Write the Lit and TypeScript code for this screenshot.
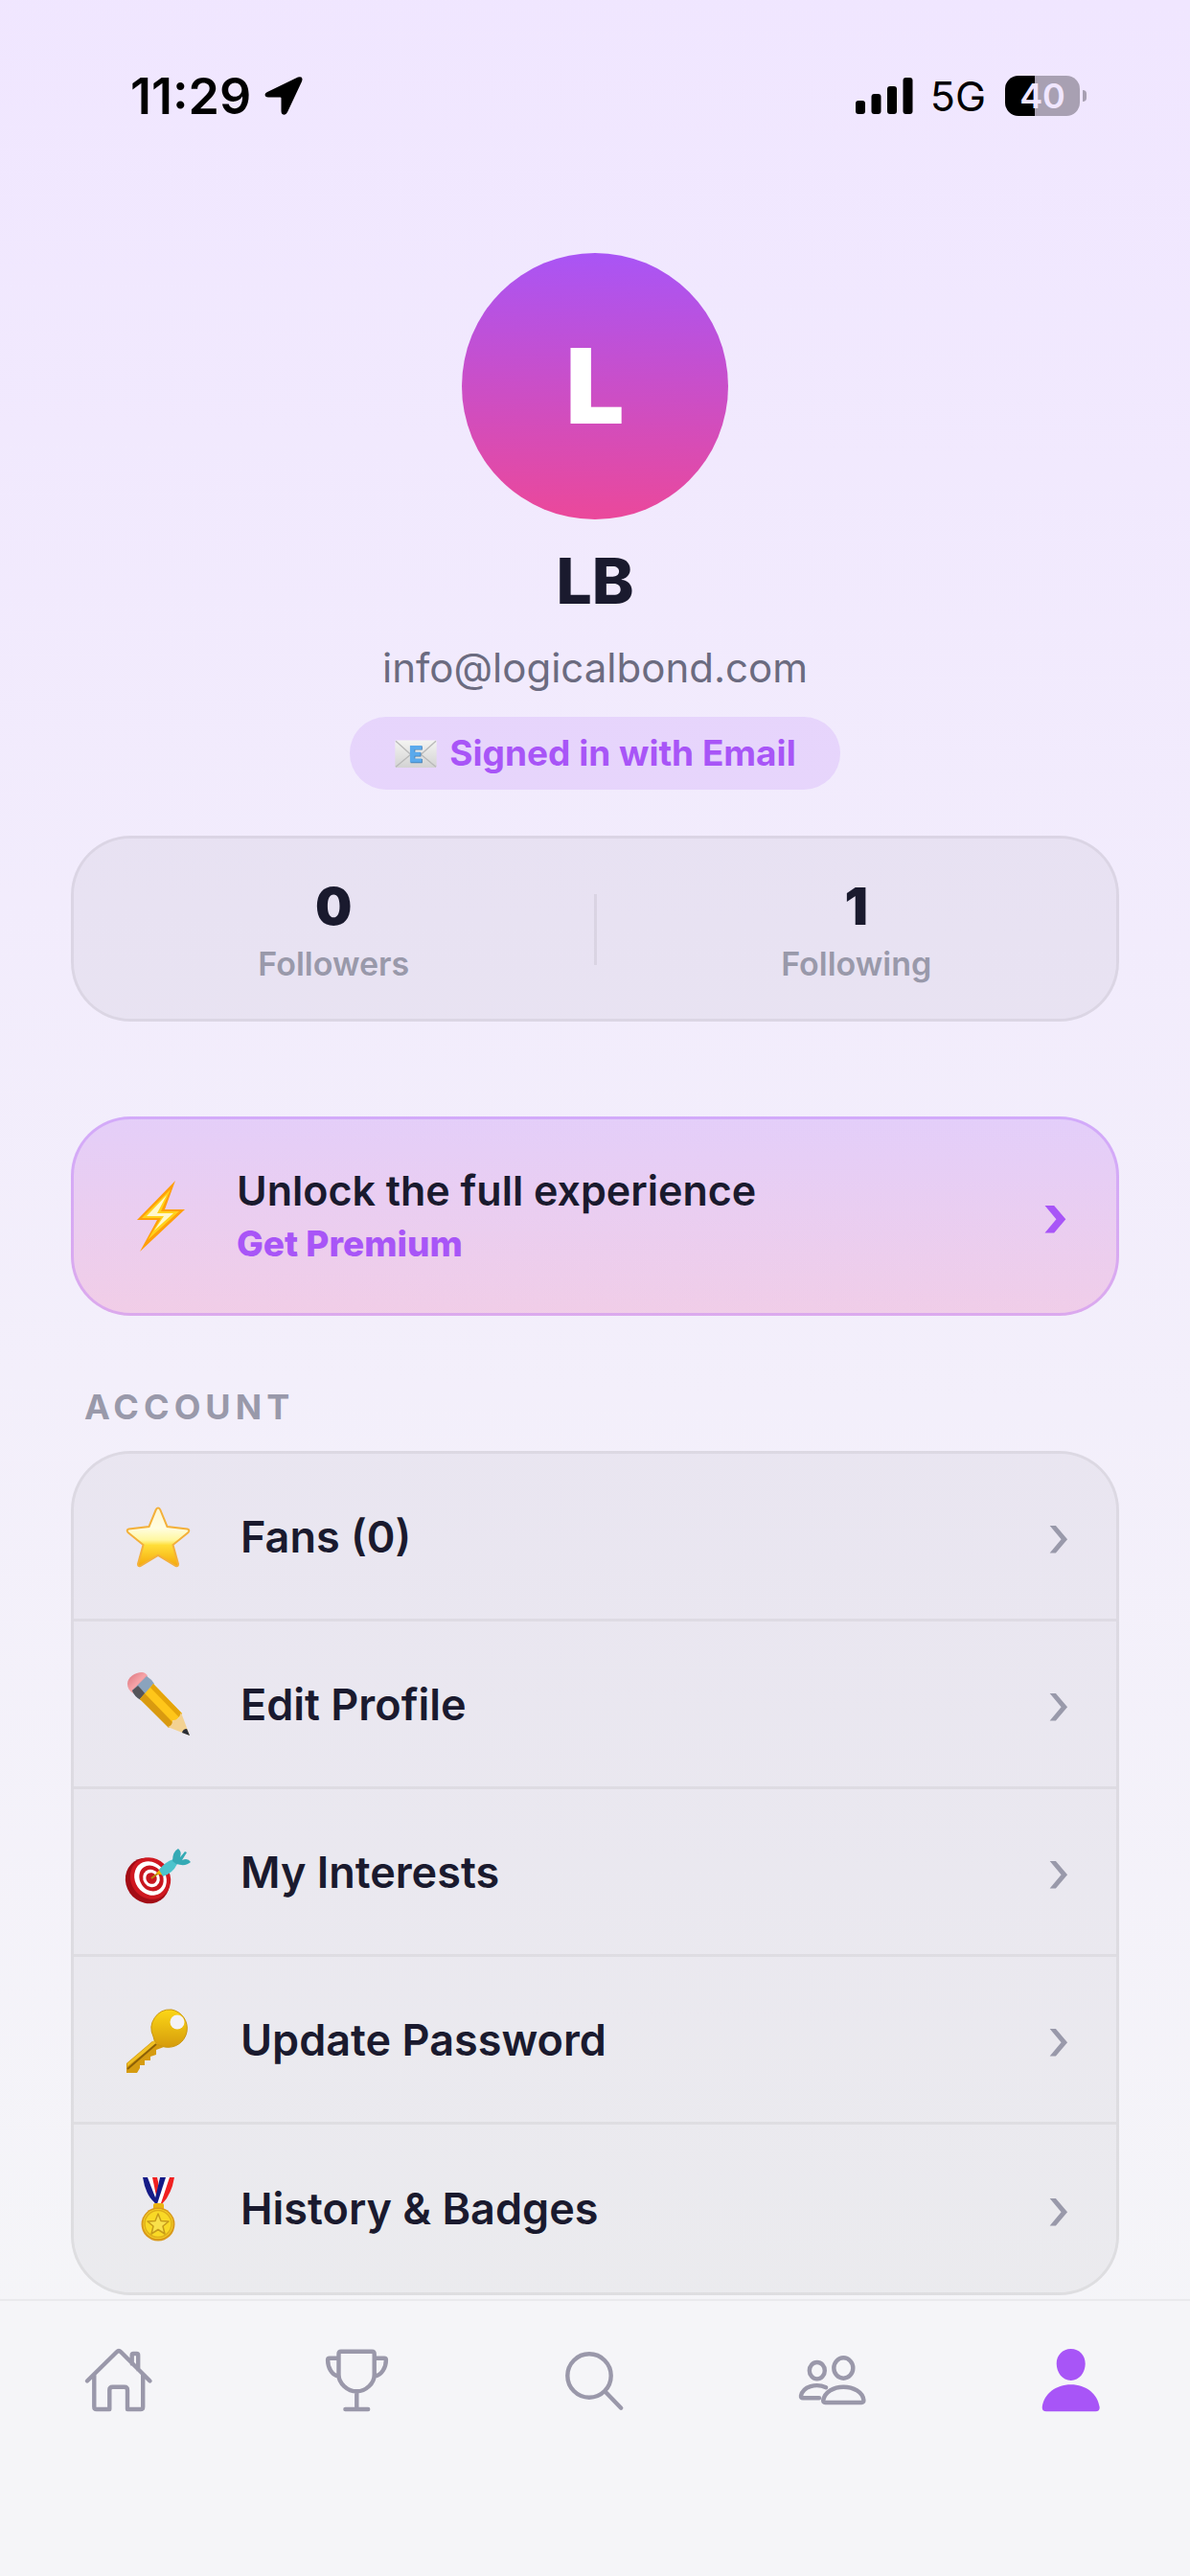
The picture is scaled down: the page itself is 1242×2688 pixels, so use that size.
import { LitElement, html, css, svg } from 'lit';
import { customElement, property, state } from 'lit/decorators.js';
import { classMap } from 'lit/directives/class-map.js';

const emojis: Record<string, unknown> = {
  mail: svg`
    <defs>
      <linearGradient id="paper" x1="0" y1="0" x2="0" y2="1">
        <stop offset="0" stop-color="#f4f4f2"/><stop offset="1" stop-color="#d3d3d3"/>
      </linearGradient>
    </defs>
    <rect x="2" y="14" width="64" height="42" rx="2" fill="url(#paper)"/>
    <path d="M3 15L26 36M65 15L42 36M3 55L27 35M65 55L41 35" stroke="#b9b9b9" stroke-width="2" fill="none"/>
    <path d="M26 23h18v6H33v4h9v6h-9v4h11v6H26z" fill="#3c74a8"/>
    <path d="M25 22h18v6H32v4h9v6h-9v4h11v6H25z" fill="#5aa9ec"/>`,
  bolt: svg`
    <path d="M52 -3L12 38H33L15 71L62 27H41z" fill="#ff9f0a"/>
    <path d="M47 6L17 36H37L23 59L56 29H37z" fill="#ffd21a"/>
    <path d="M43 12L22 34H40L30 49L50 31H33z" fill="#fff8cc"/>`,
  star: svg`
    <defs>
      <linearGradient id="gold" x1="0" y1="0" x2="0" y2="1">
        <stop offset="0" stop-color="#fff6d0"/><stop offset=".35" stop-color="#fffde0"/><stop offset=".55" stop-color="#fff7a0"/>
        <stop offset=".64" stop-color="#ffde38"/><stop offset="1" stop-color="#f5a90c"/>
      </linearGradient>
    </defs>
    <path d="M34 4.500Q35.500 4.500 36.300 6.500L43.500 24L64.500 26.500Q67.500 27.500 65.500 30L49.500 43L55 63Q55 66 52.500 65L34 54L15.500 65Q13 66 13 63L18.500 43L2.500 30Q.5 27.500 3.500 26.500L24.500 24L31.700 6.500Q32.500 4.500 34 4.500z"
      fill="url(#gold)" stroke="#f3b03a" stroke-width="2"/>`,
  pencil: svg`
    <defs>
      <linearGradient id="rubber" x1="0" y1="0" x2="1" y2="1">
        <stop offset="0" stop-color="#d9727c"/><stop offset=".5" stop-color="#f7a4a8"/><stop offset="1" stop-color="#d9727c"/>
      </linearGradient>
    </defs>
    <path d="M2 13C2 6 10 1 17 1Q21 1 23 5L8 23Q2 19 2 13z" fill="url(#rubber)"/>
    <path d="M22 5Q27 8 30 13L16 30Q9 26 7 20z" fill="#8aa3bd"/>
    <path d="M13 15Q17 19 21 24L16 30Q9 26 7 20z" fill="#55555a"/>
    <path d="M29 13L59 44L46 59L15 29z" fill="#ffc61a"/>
    <path d="M20 23L50 54L45 59L15 29z" fill="#d99a10"/>
    <path d="M29 13L59 44L56 48L26 17z" fill="#e5a50a"/>
    <path d="M58 43L67 67L44 58Q49 57 49 51Q55 52 58 43z" fill="#f3d292"/>
    <path d="M64 60L67 67L59 64Q60 60 64 60z" fill="#2b2f36"/>`,
  target: svg`
    <g transform="translate(-1 3)">
      <ellipse cx="24" cy="40.500" rx="22.500" ry="24.500" transform="rotate(-35 24 40.500)" fill="#a30d16"/>
      <ellipse cx="27" cy="38" rx="20.500" ry="22.500" transform="rotate(-35 27 38)" fill="#cf1820"/>
      <ellipse cx="27" cy="38" rx="16" ry="18.500" transform="rotate(-35 27 38)" fill="#fff"/>
      <ellipse cx="28" cy="38" rx="12" ry="14" transform="rotate(-35 28 38)" fill="#c8161e"/>
      <ellipse cx="28" cy="38" rx="8.500" ry="9.500" transform="rotate(-35 28 38)" fill="#fff"/>
      <ellipse cx="28" cy="38" rx="5.500" ry="6" transform="rotate(-35 28 38)" fill="#c8161e"/>
      <path d="M28 38L36 32" stroke="#b8860b" stroke-width="2"/>
      <path d="M33 33L38 27L41 35z" fill="#f0b400"/>
      <path d="M36 29Q42 21 51 18L55 23Q50 33 40 36z" fill="#4cc3cc"/>
      <path d="M50 20Q50 10 56 7Q60 10 58 16L63 10L65 11L60 19Q66 16 69 21Q64 26 54 23z" fill="#35aab5"/>
    </g>`,
  key: svg`
    <defs>
      <linearGradient id="brass" x1="0" y1="0" x2="0" y2="1">
        <stop offset="0" stop-color="#fcd716"/><stop offset="1" stop-color="#d59b0c"/>
      </linearGradient>
    </defs>
    <g transform="translate(0 2)">
      <path d="M28 34L1 57V67H12L15 62V59H20V54H26V50L32 48V43L40 40z" fill="#d59b10"/>
      <path d="M30 33L2 57V60L33 36z" fill="#f0c024"/>
      <path d="M32 37L2 63" stroke="#8b6007" stroke-width="2"/>
      <path d="M48 1A19.500 19.500 0 1 1 41 40Q30 38 29 29A19.500 19.500 0 0 1 48 1z"
        fill="url(#brass)" stroke="#cb9710" stroke-width="1"/>
      <circle cx="54" cy="14" r="7.500" fill="#f4f2f6"/>
    </g>`,
  medal: svg`
    <path d="M18 1H31L36 30H32Q22 22 18 1z" fill="#fff"/>
    <path d="M18 1H23L33 27L31 28Q21 20 18 1z" fill="#151b86"/>
    <path d="M28 1H33L36 15L32 20z" fill="#f02020"/>
    <path d="M35 1H51L38 30H32z" fill="#fff"/>
    <path d="M36 1H42L33 29L30 27z" fill="#151b86"/>
    <path d="M46 1H51Q48 19 38 29L37 28z" fill="#f02020"/>
    <rect x="29" y="28" width="11" height="8" rx="2" fill="#eab310"/>
    <circle cx="34" cy="50" r="17.500" fill="#d99a1c"/>
    <circle cx="34" cy="49.500" r="15.500" fill="#f9d926"/>
    <circle cx="34" cy="49.500" r="14" fill="none" stroke="#dfae1a" stroke-width="1.500"/>
    <path d="M34 39L37 46.500L45 47L39 52L41 60L34 55.500L27 60L29 52L23 47L31 46.500z"
      fill="#f9e04a" stroke="#c79b1a" stroke-width="1.500" stroke-linejoin="round"/>`,
};

const tabIcons: Record<string, unknown> = {
  Home: svg`<path d="M6 39.500L36.800 9.200Q39 7 41.200 9.200L71.500 39.500
    M52.700 21.500V12.500Q52.700 11 54.200 11H57.700Q59.200 11 59.200 12.500V27.500
    M13.300 33V66.500Q13.300 69 15.800 69H29.300V49Q29.300 45.700 32.600 45.700H44.800Q48 45.700 48 49V69H61.700Q64.200 69 64.200 66.500V33"/>`,
  Leaderboard: svg`<path d="M22 8.700H54.200Q56.700 8.700 56.700 11.200V33C56.700 42 48 50.300 38.300 50.300S19.500 42 19.500 33V11.200Q19.500 8.700 22 8.700z
    M19 15.700H10Q8.100 15.700 8.100 17.500C8.100 25 12 33.500 19 34.500
    M57.200 15.700H67Q68.900 15.700 68.900 17.500C68.900 25 64.500 33.500 57.500 34.500
    M38.300 50.500V69M26.400 69H50.200"/>`,
  Search: svg`<circle cx="33" cy="34" r="22.700"/><path d="M49.800 50.700L66.200 67.700"/>`,
  Friends: svg`<ellipse cx="22.800" cy="28.700" rx="8" ry="8.700"/><ellipse cx="50.300" cy="26" rx="10" ry="10.700"/>
    <path d="M32.100 46.300C22 41.500 8 45 6 55Q5.700 57.300 8 57.300H25
    M31.200 62Q29 62 29.200 59.500C31 51 40 45.700 50.300 45.700S70.500 51 71.400 59.500Q71.500 62 69.200 62z"/>`,
  Profile: svg`<path stroke="none" fill="currentColor" d="M38.700 6C47.500 6 53.700 12.500 53.700 21.500S47.500 39 38.700 39S23.700 30.500 23.700 21.500S30 6 38.700 6z
    M13 71.300Q8.700 71.300 8.700 67C10.500 53 23 43.300 38.700 43.300S66.800 53 68.700 67Q68.700 71.300 64.500 71.300z"/>`,
};

@customElement('emoji-icon')
export class EmojiIcon extends LitElement {
  static styles = css`
    :host {
      display: block;
      flex: none;
      width: 68px;
    }
    svg {
      display: block;
      width: 100%;
      overflow: visible;
    }
  `;

  @property() name = '';

  render() {
    return html`<svg viewBox="0 0 68 68" aria-hidden="true">${emojis[this.name]}</svg>`;
  }
}

@customElement('status-bar')
export class StatusBar extends LitElement {
  static styles = css`
    :host {
      display: flex;
      justify-content: space-between;
      align-items: center;
      padding: 68px 108px 0 136px;
      height: 64px;
      color: #000;
    }
    .left,
    .right {
      display: flex;
      align-items: center;
    }
    .left {
      gap: 14px;
    }
    .time {
      font-size: 52px;
      font-weight: 600;
    }
    .arrow {
      width: 40px;
      height: 42px;
    }
    .signal {
      width: 60px;
      height: 38px;
    }
    .network {
      margin: 0 20px 0 18px;
      font-size: 43px;
    }
    .battery {
      width: 78px;
      line-height: 42px;
      border-radius: 14px;
      background: linear-gradient(90deg, #000 40%, #a8a0b2 40%);
      color: #f0e6ff;
      font-size: 36px;
      font-weight: 600;
      text-align: center;
    }
    .nub {
      width: 4px;
      height: 12px;
      margin-left: 3px;
      border-radius: 0 4px 4px 0;
      background: #a8a0b2;
    }
  `;

  render() {
    return html`
      <div class="left">
        <span class="time">11:29</span>
        <svg class="arrow" viewBox="0 0 40 42" aria-hidden="true">
          <path d="M3 17L35 1.500Q41 0 39 6L24 38Q22 42 18.500 40Q17.500 39 17.500 37V23.500Q17.500 22.500 16.500 22.500H4Q1 22.500 .5 20Q.5 18 3 17z"/>
        </svg>
      </div>
      <div class="right">
        <svg class="signal" viewBox="0 0 60 38" aria-hidden="true">
          <rect x="0" y="24" width="10" height="14" rx="3"/>
          <rect x="16.500" y="17" width="10" height="21" rx="3"/>
          <rect x="33" y="9" width="10" height="29" rx="3"/>
          <rect x="49.500" y="0" width="10" height="38" rx="3"/>
        </svg>
        <span class="network">5G</span>
        <span class="battery">40</span>
        <span class="nub"></span>
      </div>
    `;
  }
}

@customElement('tab-bar')
export class TabBar extends LitElement {
  static styles = css`
    :host {
      display: block;
      background: #f5f5f8;
      border-top: 2px solid #eaeaed;
    }
    nav {
      display: flex;
      padding: 44px 0 165px;
    }
    .tab {
      flex: 1;
      display: flex;
      justify-content: center;
      padding: 0;
      border: none;
      background: none;
      color: #9a98aa;
      cursor: pointer;
    }
    .tab.active {
      color: #a855f7;
    }
    svg {
      width: 78px;
      height: 78px;
      fill: none;
      stroke: currentColor;
      stroke-width: 4.4;
      stroke-linecap: round;
      stroke-linejoin: round;
    }
  `;

  @state() active = 'Profile';

  render() {
    return html`
      <nav>
        ${Object.keys(tabIcons).map(
          (name) => html`
            <button class=${classMap({ tab: true, active: name === this.active })} aria-label=${name}
              @click=${() => (this.active = name)}>
              <svg viewBox="0 0 78 78">${tabIcons[name]}</svg>
            </button>
          `
        )}
      </nav>
    `;
  }
}

@customElement('app-root')
export class AppRoot extends LitElement {
  static styles = css`
    :host {
      display: flex;
      flex-direction: column;
      min-height: 100vh;
      background: linear-gradient(182deg, #f0e6ff, #f5f5f8 90%);
      color: #1a1a2e;
      font-family: Inter, 'Liberation Sans', sans-serif;
    }
    main {
      flex: 1;
      padding: 132px 74px 4px;
    }
    .profile {
      display: flex;
      flex-direction: column;
      align-items: center;
    }
    .avatar {
      width: 278px;
      line-height: 278px;
      border-radius: 50%;
      background: linear-gradient(182deg, #a855f7, #ec4899);
      color: #fff;
      font-size: 108px;
      font-weight: 900;
      text-align: center;
    }
    .name {
      margin: 24px 0 0;
      font-size: 66px;
      line-height: 80px;
      font-weight: 800;
    }
    .email {
      margin: 20px 0 0;
      color: #6b6b80;
      font-size: 42px;
      line-height: 62px;
    }
    .pill {
      display: flex;
      align-items: center;
      gap: 12px;
      margin-top: 20px;
      padding: 14px 46px;
      border-radius: 38px;
      background: rgba(168, 85, 247, 0.15);
      color: #a855f7;
      font-size: 37px;
      line-height: 48px;
      font-weight: 700;
    }
    .pill emoji-icon {
      width: 46px;
    }
    .card {
      border: 3px solid rgba(0, 0, 0, 0.06);
      border-radius: 62px;
      background: rgba(0, 0, 0, 0.04);
    }
    .stats {
      display: flex;
      align-items: center;
      margin-top: 48px;
      padding: 39px 0 37px;
    }
    .stat {
      flex: 1;
      display: flex;
      flex-direction: column;
      gap: 8px;
      text-align: center;
    }
    .count {
      font-size: 54px;
      line-height: 64px;
      font-weight: 900;
    }
    .label {
      color: #9999aa;
      font-size: 34px;
      line-height: 40px;
      font-weight: 600;
    }
    .divider {
      width: 3px;
      height: 74px;
      background: rgba(0, 0, 0, 0.06);
    }
    .premium {
      display: flex;
      align-items: center;
      margin-top: 99px;
      padding: 46px 50px 46px 54px;
      border: 3px solid rgba(168, 85, 247, 0.3);
      border-radius: 62px;
      background: linear-gradient(181deg, rgba(168, 85, 247, 0.2), rgba(236, 72, 153, 0.2)) border-box;
      color: inherit;
      text-decoration: none;
    }
    .offer {
      flex: 1;
      display: flex;
      flex-direction: column;
      gap: 2px;
      margin-left: 48px;
    }
    .title {
      font-size: 43px;
      line-height: 56px;
      font-weight: 600;
    }
    .action {
      color: #a855f7;
      font-size: 37px;
      line-height: 52px;
      font-weight: 800;
    }
    .premium .chevron {
      color: #a855f7;
      font-weight: 700;
    }
    .chevron {
      color: #9999aa;
      font-size: 62px;
      line-height: 72px;
    }
    .section {
      margin: 71px 14px 22px;
      color: #9999aa;
      font-size: 36px;
      line-height: 48px;
      font-weight: 700;
      letter-spacing: 5px;
    }
    .list {
      overflow: hidden;
    }
    .row {
      display: flex;
      align-items: center;
      box-sizing: border-box;
      min-height: 175px;
      padding: 0 48px 0 54px;
      border-bottom: 3px solid rgba(0, 0, 0, 0.05);
      color: inherit;
      font-size: 45px;
      font-weight: 600;
      text-decoration: none;
    }
    .row:last-child {
      border-bottom: none;
    }
    .row .text {
      flex: 1;
      margin-left: 52px;
    }
    .row .chevron {
      font-weight: 400;
    }
  `;

  @property({ type: Number }) fans = 0;
  @property({ type: Number }) followers = 0;
  @property({ type: Number }) following = 1;

  private _row(icon: string, text: string) {
    return html`
      <a class="row" href="#${icon}">
        <emoji-icon name=${icon}></emoji-icon>
        <span class="text">${text}</span>
        <span class="chevron">›</span>
      </a>
    `;
  }

  render() {
    return html`
      <status-bar></status-bar>
      <main>
        <section class="profile">
          <div class="avatar">L</div>
          <h1 class="name">LB</h1>
          <p class="email">info@logicalbond.com</p>
          <div class="pill"><emoji-icon name="mail"></emoji-icon>Signed in with Email</div>
        </section>

        <section class="card stats">
          <div class="stat">
            <span class="count">${this.followers}</span>
            <span class="label">Followers</span>
          </div>
          <div class="divider"></div>
          <div class="stat">
            <span class="count">${this.following}</span>
            <span class="label">Following</span>
          </div>
        </section>

        <a class="premium" href="#premium">
          <emoji-icon name="bolt"></emoji-icon>
          <span class="offer">
            <span class="title">Unlock the full experience</span>
            <span class="action">Get Premium</span>
          </span>
          <span class="chevron">›</span>
        </a>

        <h2 class="section">ACCOUNT</h2>
        <div class="card list">
          ${this._row('star', `Fans (${this.fans})`)}
          ${this._row('pencil', 'Edit Profile')}
          ${this._row('target', 'My Interests')}
          ${this._row('key', 'Update Password')}
          ${this._row('medal', 'History & Badges')}
        </div>
      </main>
      <tab-bar></tab-bar>
    `;
  }
}
